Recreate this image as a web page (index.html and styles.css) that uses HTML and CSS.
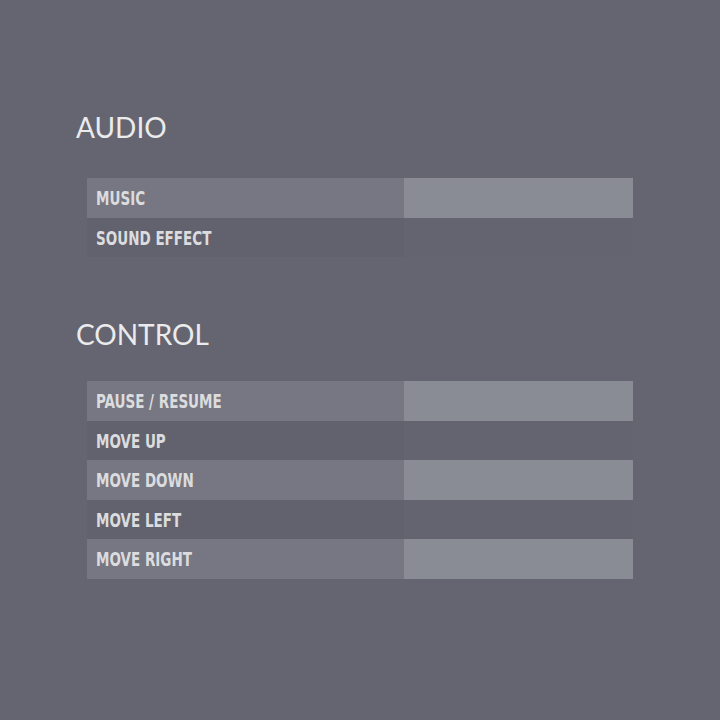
FILE: index.html
```html
<!DOCTYPE html>
<html>
<head>
<meta charset="utf-8">
<link rel="stylesheet" href="styles.css">
</head>
<body>
<main class="page">
  <section class="section section-audio">
    <h2 class="heading">AUDIO</h2>
    <div class="table">
      <div class="row row-light"><div class="label"><span class="label-text">MUSIC</span></div><div class="value"></div></div>
      <div class="row row-dark"><div class="label"><span class="label-text">SOUND EFFECT</span></div><div class="value"></div></div>
    </div>
  </section>
  <section class="section section-control">
    <h2 class="heading">CONTROL</h2>
    <div class="table">
      <div class="row row-light"><div class="label"><span class="label-text">PAUSE / RESUME</span></div><div class="value"></div></div>
      <div class="row row-dark"><div class="label"><span class="label-text">MOVE UP</span></div><div class="value"></div></div>
      <div class="row row-light"><div class="label"><span class="label-text">MOVE DOWN</span></div><div class="value"></div></div>
      <div class="row row-dark"><div class="label"><span class="label-text">MOVE LEFT</span></div><div class="value"></div></div>
      <div class="row row-light"><div class="label"><span class="label-text">MOVE RIGHT</span></div><div class="value"></div></div>
    </div>
  </section>
</main>
</body>
</html>
```
FILE: styles.css
```css
html, body {
  margin: 0;
  padding: 0;
  background: #646570;
}
body {
  width: 720px;
  height: 720px;
  overflow: hidden;
}
.page {
  padding: 109px 0 0 76px;
  display: flex;
  flex-direction: column;
}
.section-control {
  margin-top: 59px;
}
.heading {
  margin: 0;
  font-family: "Lato", "Open Sans", sans-serif;
  font-weight: 400;
  font-size: 28px;
  line-height: 36px;
  color: #ebebeb;
  letter-spacing: 0;
}
.table {
  margin-left: 11px;
  width: 546px;
  display: flex;
  flex-direction: column;
}
.section-audio .table {
  margin-top: 33px;
}
.section-control .table {
  margin-top: 29px;
}
.row {
  display: grid;
  grid-template-columns: 317px 229px;
  height: 39.5px;
}
.label {
  padding-left: 9px;
  display: flex;
  align-items: center;
  font-family: "DejaVu Sans Condensed", "DejaVu Sans", sans-serif;
  font-weight: 700;
  font-size: 19px;
  color: #dcdcde;
}
.label-text {
  display: inline-block;
  transform: scaleX(0.79);
  transform-origin: left center;
  white-space: nowrap;
  padding-top: 1px;
}
.row-light .label { background: #767782; }
.row-light .value { background: #898b95; }
.row-dark .label { background: #61626d; }
.row-dark .value { background: #63646f; }
```
